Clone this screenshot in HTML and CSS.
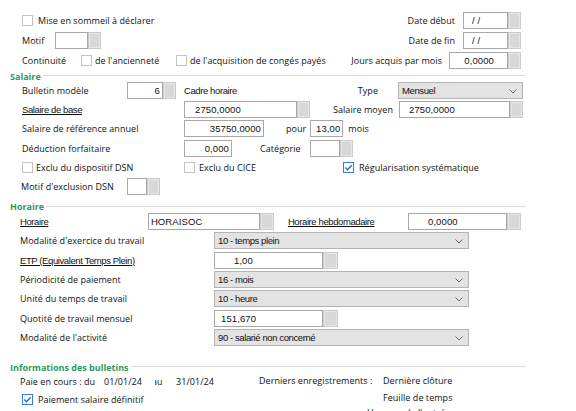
FILE: index.html
```html
<!DOCTYPE html>
<html lang="fr">
<head>
<meta charset="utf-8">
<title>Salarié</title>
<link rel="stylesheet" href="styles.css">
</head>
<body>
<div class="page">
  <div class="top">
    <div class="row r20">
      <span class="cb"></span><span class="lbl ml5">Mise en sommeil à déclarer</span>
      <div class="right">
        <span class="lbl">Date début</span>
        <span class="field ml8"><span class="inp w45 val pl8">/ /</span><span class="btn"></span></span>
      </div>
    </div>
    <div class="row r20">
      <span class="lbl w33">Motif</span>
      <span class="field"><span class="inp w33"></span><span class="btn"></span></span>
      <div class="right">
        <span class="lbl">Date de fin</span>
        <span class="field ml8"><span class="inp w45 val pl8">/ /</span><span class="btn"></span></span>
      </div>
    </div>
    <div class="row r20">
      <span class="lbl w59">Continuité</span>
      <span class="cb"></span><span class="lbl ml3 w81">de l'ancienneté</span>
      <span class="cb"></span><span class="lbl ml3">de l'acquisition de congés payés</span>
      <div class="right">
        <span class="lbl">Jours acquis par mois</span>
        <span class="field ml7"><span class="inp w59 num pr13">0,0000</span><span class="btn"></span></span>
      </div>
    </div>
  </div>

  <div class="sec"><span class="sec-title">Salaire</span></div>
  <div class="salaire">
    <div class="row r19">
      <span class="lbl w105">Bulletin modèle</span>
      <span class="field"><span class="inp w36 num">6</span><span class="btn"></span></span>
      <span class="val txt ml8">Cadre horaire</span>
      <div class="right pr53">
        <span class="lbl">Type</span>
        <span class="sel w125 ml20"><span class="val txt">Mensuel</span><svg class="chev" width="8" height="5" viewBox="0 0 8 5"><polyline points="0.5,0.5 4,4 7.5,0.5" fill="none" stroke="#6a6a6a" stroke-width="1"/></svg></span>
      </div>
    </div>
    <div class="row r19">
      <span class="val txt ul w162">Salaire de base</span>
      <span class="field"><span class="inp w113 val pl10">2750,0000</span><span class="btn"></span></span>
      <div class="right pr53">
        <span class="lbl">Salaire moyen</span>
        <span class="field ml6"><span class="inp w111 val pl9">2750,0000</span><span class="btn"></span></span>
      </div>
    </div>
    <div class="row r19">
      <span class="lbl w162">Salaire de référence annuel</span>
      <span class="inp w80 num">35750,0000</span>
      <span class="lbl ml22">pour</span>
      <span class="inp w33 num ml4">13,00</span>
      <span class="lbl ml5">mois</span>
    </div>
    <div class="row r19">
      <span class="lbl w162">Déduction forfaitaire</span>
      <span class="inp w48 num">0,000</span>
      <span class="lbl ml28">Catégorie</span>
      <span class="field ml9"><span class="inp w30"></span><span class="btn"></span></span>
    </div>
    <div class="row r19">
      <span class="cb"></span><span class="lbl ml3 w148">Exclu du dispositif DSN</span>
      <span class="cb"></span><span class="lbl ml4 w144">Exclu du CICE</span>
      <span class="cb on"><svg width="11" height="11" viewBox="0 0 11 11"><polyline points="2.3,5.6 4.5,7.8 8.7,3.2" fill="none" stroke="#1e6fd6" stroke-width="1.4"/></svg></span><span class="lbl ml5">Régularisation systématique</span>
    </div>
    <div class="row r19 pl21">
      <span class="lbl w106">Motif d'exclusion DSN</span>
      <span class="field"><span class="inp w20"></span><span class="btn"></span></span>
    </div>
  </div>

  <div class="sec sec-h"><span class="sec-title">Horaire</span></div>
  <div class="horaire">
    <div class="row r193">
      <span class="val txt ul w131">Horaire</span>
      <span class="field"><span class="inp w112 val pl2">HORAISOC</span><span class="btn w14"></span></span>
      <span class="val txt ul ml14 w123">Horaire hebdomadaire</span>
      <span class="field"><span class="inp w99 val pl19">0,0000</span><span class="btn w14"></span></span>
    </div>
    <div class="row r193">
      <span class="lbl w194">Modalité d'exercice du travail</span>
      <span class="sel w255"><span class="val txt">10 - temps plein</span><svg class="chev" width="8" height="5" viewBox="0 0 8 5"><polyline points="0.5,0.5 4,4 7.5,0.5" fill="none" stroke="#6a6a6a" stroke-width="1"/></svg></span>
    </div>
    <div class="row r193">
      <span class="val txt ul w194">ETP (Equivalent Temps Plein)</span>
      <span class="field"><span class="inp w109 val pl19">1,00</span><span class="btn w15"></span></span>
    </div>
    <div class="row r193">
      <span class="lbl w194">Périodicité de paiement</span>
      <span class="sel w255"><span class="val txt">16 - mois</span><svg class="chev" width="8" height="5" viewBox="0 0 8 5"><polyline points="0.5,0.5 4,4 7.5,0.5" fill="none" stroke="#6a6a6a" stroke-width="1"/></svg></span>
    </div>
    <div class="row r193">
      <span class="lbl w194">Unité du temps de travail</span>
      <span class="sel w255"><span class="val txt">10 - heure</span><svg class="chev" width="8" height="5" viewBox="0 0 8 5"><polyline points="0.5,0.5 4,4 7.5,0.5" fill="none" stroke="#6a6a6a" stroke-width="1"/></svg></span>
    </div>
    <div class="row r193">
      <span class="lbl w194">Quotité de travail mensuel</span>
      <span class="field"><span class="inp w109 val pl6">151,670</span><span class="btn w15"></span></span>
    </div>
    <div class="row r193">
      <span class="lbl w194">Modalité de l'activité</span>
      <span class="sel w255"><span class="val txt">90 - salarié non concerné</span><svg class="chev" width="8" height="5" viewBox="0 0 8 5"><polyline points="0.5,0.5 4,4 7.5,0.5" fill="none" stroke="#6a6a6a" stroke-width="1"/></svg></span>
    </div>
  </div>

  <div class="sec sec-i"><span class="sec-title">Informations des bulletins</span></div>
  <div class="info">
    <div class="info-left">
      <div class="line l18">
        <span class="lbl w84">Paie en cours : du</span>
        <span class="lbl w50">01/01/24</span>
        <span class="lbl clip w22"><span class="clip-in">au</span></span>
        <span class="lbl">31/01/24</span>
      </div>
      <div class="line l19 pl2">
        <span class="cb on"><svg width="11" height="11" viewBox="0 0 11 11"><polyline points="2.3,5.6 4.5,7.8 8.7,3.2" fill="none" stroke="#1e6fd6" stroke-width="1.4"/></svg></span><span class="lbl ml5">Paiement salaire définitif</span>
      </div>
    </div>
    <div class="info-mid">
      <div class="line l17"><span class="lbl">Derniers enregistrements :</span></div>
      <div class="line l17"></div>
      <div class="line l12 mid-last"><span class="lbl">Heu</span></div>
    </div>
    <div class="info-right">
      <div class="line l17"><span class="lbl">Dernière clôture</span></div>
      <div class="line l17"><span class="lbl">Feuille de temps</span></div>
      <div class="line l12 right-last"><span class="lbl">de l'entrée</span></div>
    </div>
  </div>
</div>
</body>
</html>
```
FILE: styles.css
```css
* { box-sizing: border-box; }
html, body { margin: 0; padding: 0; background: #ffffff; }
body { overflow: hidden; }
.page {
  width: 576px;
  height: 411px;
  overflow: hidden;
  color: #111;
  font-family: "Open Sans", "Noto Sans", sans-serif;
  font-size: 9px;
}
.top { padding-top: 10px; }
.row {
  display: flex;
  align-items: center;
  padding-left: 22px;
  padding-right: 55px;
  white-space: nowrap;
}
.r20 { height: 20px; }
.r19 { height: 19.2px; }
.r193 { height: 19.3px; padding-left: 20px; }
.pl21 { padding-left: 21px; }
.right { margin-left: auto; display: flex; align-items: center; }
.pr53 { margin-right: -2px; }

.lbl { font-family: "Open Sans", "Noto Sans", sans-serif; font-size: 9px; letter-spacing: 0.05px; display: inline-block; }
.val { font-family: "Liberation Sans", Arial, sans-serif; font-size: 9.5px; letter-spacing: -0.1px; }
.val.txt { letter-spacing: -0.4px; }
.ul { text-decoration: underline; text-underline-offset: 1px; }

.cb {
  width: 11px; height: 11px;
  border: 1px solid #c3c3c3;
  background: #fff;
  display: inline-flex;
  flex: none;
}
.cb.on { border-color: #3a7ed8; }
.cb svg { display: block; margin: -1px; }

.field { display: inline-flex; flex: none; }
.inp {
  height: 17px;
  border: 1px solid #a8a8a8;
  background: #fff;
  display: inline-flex;
  align-items: center;
  padding: 0 3px;
  flex: none;
  font-family: "Liberation Sans", Arial, sans-serif;
  font-size: 9.5px;
  letter-spacing: 0.1px;
}
.num { justify-content: flex-end; padding-right: 2px; }
.btn {
  width: 13px; height: 17px;
  background: #d8d8d8;
  border: 1px solid #cbcbcb;
  box-shadow: inset 0 0 0 1px #e6e6e6;
  flex: none;
}
.sel {
  height: 17px;
  background: #e3e3e3;
  border: 1px solid #b4b4b4;
  display: inline-flex;
  align-items: center;
  padding-left: 3px;
  position: relative;
  flex: none;
}
.chev { position: absolute; right: 5px; top: 6px; }

.sec {
  display: flex;
  align-items: center;
  height: 10px;
  padding-left: 10px;
  padding-right: 50px;
  margin-top: 1px;
}
.sec::after {
  content: "";
  flex: 1;
  height: 1px;
  background: #dadada;
  margin-left: 2px;
  margin-top: -1px;
}
.sec-title {
  color: #2a9a5c;
  font-family: "Open Sans", "Noto Sans", sans-serif;
  font-weight: 700;
  font-size: 9px;
}
.sec-h { margin-top: 5.8px; }
.sec-i { margin-top: 15px; }

.info { display: flex; padding-left: 20px; white-space: nowrap; }
.info-left { width: 239px; }
.info-mid { width: 124px; }
.line { display: flex; align-items: center; }
.l18 { height: 18px; }
.l19 { height: 19px; }
.l17 { height: 17px; }
.l12 { height: 12px; }
.mid-last { padding-left: 108px; }
.right-last { padding-left: 22px; }
.clip { overflow: hidden; }
.clip-in { display: inline-block; margin-left: -2px; clip-path: inset(0 0 0 3px); }

.w14 { width: 14px; }
.w15 { width: 15px; }
.w20 { width: 20px; }
.w22 { width: 22px; }
.w30 { width: 30px; }
.w33 { width: 33px; }
.w36 { width: 36px; }
.w45 { width: 45px; }
.w48 { width: 48px; }
.w50 { width: 50px; }
.w59 { width: 59px; }
.w80 { width: 80px; }
.w81 { width: 81px; }
.w84 { width: 84px; }
.w99 { width: 99px; }
.w105 { width: 105px; }
.w106 { width: 106px; }
.w109 { width: 109px; }
.w111 { width: 111px; }
.w112 { width: 112px; }
.w113 { width: 113px; }
.w123 { width: 123px; }
.w125 { width: 125px; }
.w131 { width: 131px; }
.w144 { width: 144px; }
.w148 { width: 148px; }
.w162 { width: 162px; }
.w194 { width: 194px; }
.w255 { width: 255px; }
.ml3 { margin-left: 3px; }
.ml4 { margin-left: 4px; }
.ml5 { margin-left: 5px; }
.ml6 { margin-left: 6px; }
.ml7 { margin-left: 7px; }
.ml8 { margin-left: 8px; }
.ml9 { margin-left: 9px; }
.ml14 { margin-left: 14px; }
.ml20 { margin-left: 20px; }
.ml22 { margin-left: 22px; }
.ml28 { margin-left: 28px; }
.pl2 { padding-left: 2px; }
.pl6 { padding-left: 6px; }
.pl8 { padding-left: 8px; }
.pl9 { padding-left: 9px; }
.pl10 { padding-left: 10px; }
.pl19 { padding-left: 19px; }
.pr13 { padding-right: 13px; }
```
